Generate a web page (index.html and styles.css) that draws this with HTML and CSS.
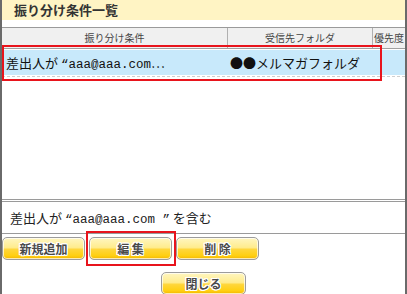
FILE: index.html
```html
<!DOCTYPE html>
<html>
<head>
    <link rel="stylesheet" href="styles.css">
</head>
<body>
    <div class="frame">
        <div class="title">振り分け条件一覧</div>

        <div class="list">
            <div class="list_head">
                <div class="col col_rule">振り分け条件</div>
                <div class="col col_folder">受信先フォルダ</div>
                <div class="col col_prio">優先度</div>
            </div>
            <div class="list_row">
                <div class="row_inner">
                    <div class="cell cell_rule">差出人が <span class="mono">“aaa@aaa.com</span>⋯</div>
                    <div class="cell cell_folder">●●メルマガフォルダ</div>
                    <div class="cell cell_prio"></div>
                </div>
            </div>
        </div>

        <div class="detail">差出人が <span class="mono">“aaa@aaa.com ”</span> を含む</div>

        <div class="actions">
            <button class="btn_yellow">新規追加</button>
            <button class="btn_yellow">編 集</button>
            <button class="btn_yellow">削 除</button>
        </div>
        <div class="close_row">
            <button class="btn_yellow btn_wide">閉じる</button>
        </div>

        <div class="mark mark_row"></div>
        <div class="mark mark_edit"></div>
    </div>
</body>
</html>
```

FILE: styles.css
```css
body { margin: 0; font-family: "Noto Sans CJK JP", "DejaVu Sans", sans-serif; background: #fff; }
.frame { position: relative; width: 403px; height: 294px; border-left: 2px solid #6a6a6a; border-right: 2px solid #6a6a6a; overflow: hidden; }

.title { height: 20px; line-height: 20px; padding-left: 12px; background: #fff4c4; font-size: 13px; font-weight: bold; color: #333; }

.list { margin-top: 7px; height: 171px; border-top: 1px solid #9a9a9a; border-bottom: 1px solid #9a9a9a; }
.list_head { display: grid; grid-template-columns: 226px 145px 1fr; height: 20px; background: #f0f0f0; border-bottom: 1px solid #a0a0a0; }
.col { font-size: 10px; line-height: 20px; color: #444; text-align: center; white-space: nowrap; overflow: hidden; }
.col_rule, .col_folder { border-right: 1px solid #b0b0b0; }
.col_prio { text-align: left; padding-left: 1px; }

.list_row { padding: 1px 0; border-bottom: 1px dashed #cfcfcf; }
.row_inner { display: grid; grid-template-columns: 226px 145px 1fr; height: 25px; background: #c8e9fb; }
.cell { font-size: 13px; line-height: 25px; color: #111; white-space: nowrap; overflow: hidden; }
.cell_rule { padding-left: 4px; }
.cell_folder { padding-left: 2px; }

.mono { font-family: "Liberation Mono", monospace; font-size: 12.5px; }

.detail { margin-top: 1px; height: 31px; line-height: 31px; padding-left: 8px; border-top: 1px solid #9a9a9a; border-bottom: 1px solid #9a9a9a; font-size: 13px; color: #222; }

.actions { display: flex; gap: 4px; padding-top: 3px; }
.close_row { display: flex; justify-content: center; margin-top: 12px; }

.btn_yellow {
    width: 83px; height: 23px; padding: 0; cursor: pointer;
    border: 1px solid #9c9c9c; border-radius: 5px;
    background: linear-gradient(#fff6c0 0%, #ffec8e 45%, #ffd63a 55%, #ffcf10 85%, #f2b400 100%);
    box-shadow: inset 0 0 0 1px rgba(255,255,255,0.7);
    font-family: "Noto Sans CJK JP", sans-serif; font-size: 12px; font-weight: bold; color: #4a4a4a;
    text-shadow: 1px 0 #fff, -1px 0 #fff, 0 1px #fff, 0 -1px #fff, 1px 1px #fff, -1px -1px #fff, 1px -1px #fff, -1px 1px #fff;
}
.btn_wide { width: 85px; }

.mark { position: absolute; border: 2px solid #e8141c; }
.mark_row { left: 0px; top: 45px; width: 376px; height: 32px; }
.mark_edit { left: 84px; top: 231px; width: 86px; height: 31px; }
```
